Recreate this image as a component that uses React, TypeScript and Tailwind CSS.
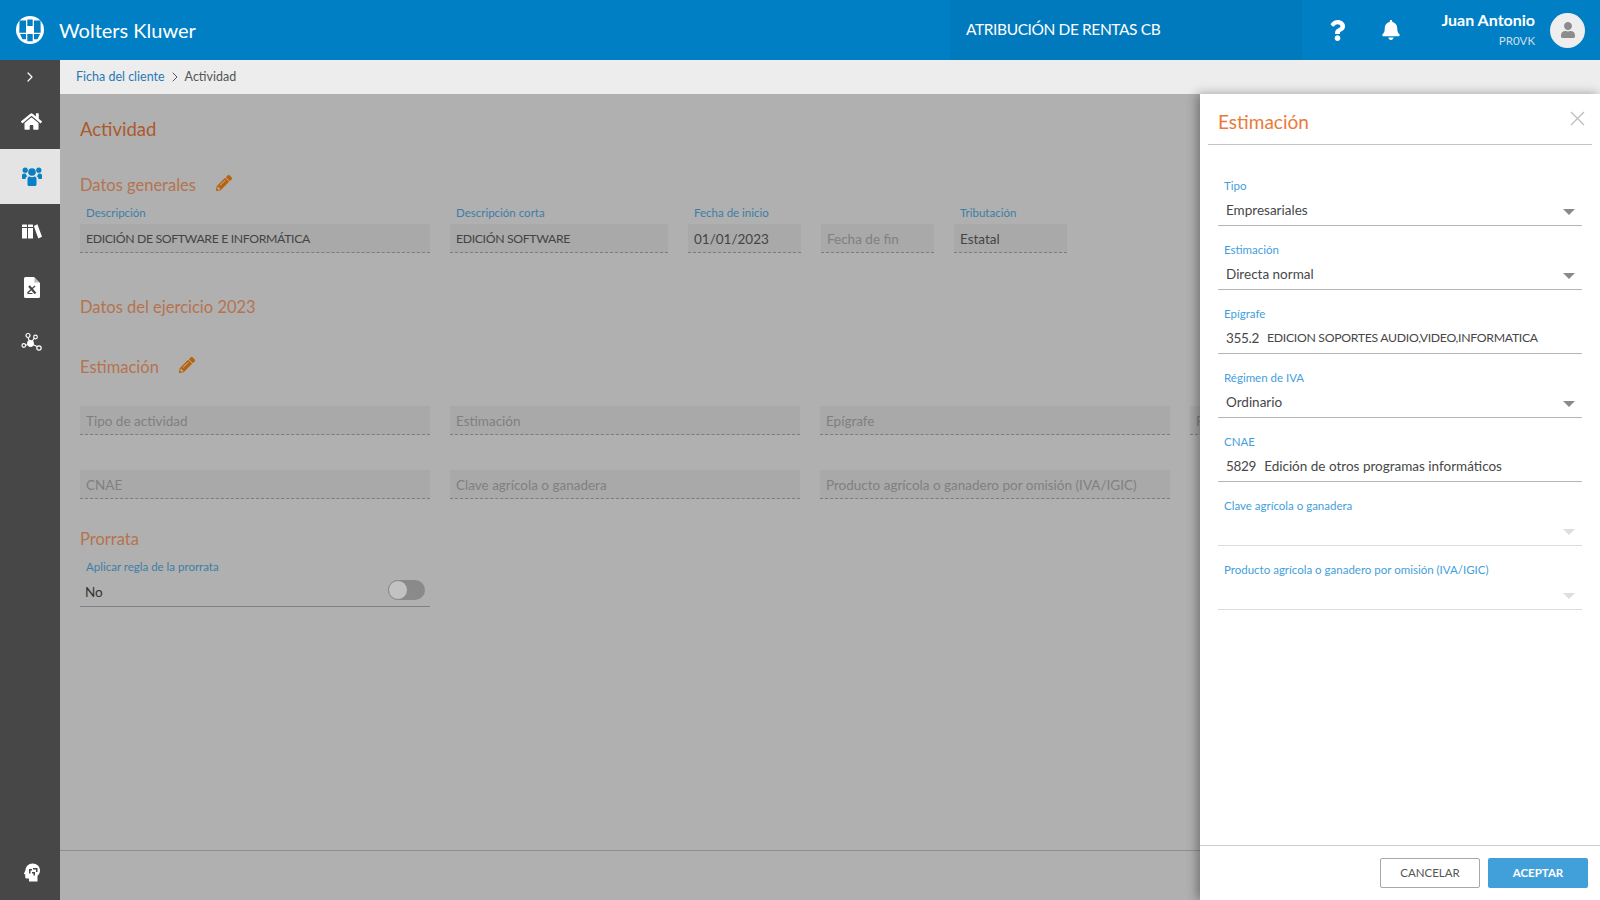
import React from "react"
import { ChevronRight } from "lucide-react"
import { FaHome, FaPencilAlt, FaQuestion, FaBell, FaUser } from "react-icons/fa"

const font = "[font-family:Lato,'Liberation_Sans',sans-serif]"

function Logo() {
  return (
    <svg width="30" height="30" viewBox="0 0 30 30">
      <circle cx="15" cy="15" r="14" fill="#fff" />
      <path d="M4.500 5.500h6.500v12.200H4.300zM12.300 4.500h5.400v6.500h-5.400zM19 5.500h6.500l.2 12.200H19zM5 19h6v5.300H7.500zM12.300 19h5.400v7.200h-5.400zM19 19h6l-2.500 5.300H19z" fill="#007fc5" />
    </svg>
  )
}

function UsersIcon() {
  return (
    <svg width="20" height="19" viewBox="0 0 20 19" fill="#0a80c4">
      <circle cx="3.200" cy="3.200" r="2.600" />
      <circle cx="16.800" cy="3.200" r="2.600" />
      <circle cx="10" cy="5" r="3.800" />
      <path d="M0 8.500c0-1.200.8-2 2-2h1.500c.3 1.200 1 2 1.800 2.700-1 .5-1.800 1.500-1.900 2.800H1c-.6 0-1-.4-1-1zM20 8.500c0-1.200-.8-2-2-2h-1.500c-.3 1.200-1 2-1.800 2.700 1 .5 1.800 1.500 1.900 2.800H19c.6 0 1-.4 1-1z" />
      <path d="M5.500 12c0-1.400.8-2.300 2-2.500.7.500 1.500.8 2.500.8s1.800-.3 2.500-.8c1.200.2 2 1.100 2 2.500v5.500c0 .8-.6 1.500-1.500 1.500H7c-.9 0-1.500-.7-1.500-1.500z" />
    </svg>
  )
}

function BooksIcon() {
  return (
    <svg width="20" height="15" viewBox="0 0 20 15" fill="#fff">
      <rect x="0" y="0.500" width="5" height="14" rx="0.500" />
      <rect x="6" y="0.500" width="5" height="14" rx="0.500" />
      <path d="M11.800 2l3.600-1.700L20 12.800 16.300 14.500z" />
      <rect x="0" y="3" width="5" height="1" fill="#474747" />
      <rect x="6" y="3" width="5" height="1" fill="#474747" />
    </svg>
  )
}

function FileIcon() {
  return (
    <svg width="16" height="21" viewBox="0 0 16 21">
      <path d="M1.500 0H10l6 6v13.500a1.500 1.500 0 0 1-1.500 1.500h-13A1.500 1.500 0 0 1 0 19.500v-18A1.500 1.500 0 0 1 1.500 0z" fill="#fff" />
      <path d="M10.500 1l4.500 4.500h-4.500z" fill="#b5b5b5" />
      <path d="M5 9l6.500 7.500" stroke="#474747" strokeWidth="2.200" fill="none" />
      <path d="M3.500 16l7.500-7" stroke="#474747" strokeWidth="1.300" fill="none" />
      <path d="M3.500 16.500h5" stroke="#474747" strokeWidth="1" fill="none" />
    </svg>
  )
}

function NetworkIcon() {
  return (
    <svg width="22" height="22" viewBox="0 0 22 22" fill="none" stroke="#fff" strokeWidth="1.200">
      <path d="M9.500 11.500L7 5.500M9.500 11.500L16 14.500M9.500 11.500L4 13.500M11 9.500L14 5" />
      <circle cx="9.500" cy="11.500" r="2.800" fill="#fff" />
      <circle cx="7" cy="3.500" r="2" fill="#474747" />
      <circle cx="14.500" cy="5" r="1.800" fill="#474747" />
      <circle cx="18" cy="16" r="2.200" fill="#474747" />
      <circle cx="2.800" cy="13.500" r="1.800" fill="#474747" />
    </svg>
  )
}

function HeadIcon() {
  return (
    <svg width="18" height="19" viewBox="0 0 18 19">
      <path d="M9.500 0.500c4.500 0 7.500 3 7.500 7 0 2.400-1 4-2.500 5.200V18.500H6v-3H3.500c-.8 0-1.300-.7-1.300-1.500V11.500L.8 10.800 2.400 7.500C2.700 3.500 5.500.5 9.500.5z" fill="#fff" />
      <path d="M6 6h3v1.500H7.500v3H6zM10 5h4.500v4H13V6.500h-3zM9 9h3v3.500h-1.500V10.500H9z" fill="#474747" />
    </svg>
  )
}

function Field({ label, value, placeholder, w, caps }: { label?: string; value?: string; placeholder?: string; w: string; caps?: boolean }) {
  return (
    <div className={w}>
      {label && <div className="h-[14px] mb-[4px] px-[6px] text-[11.5px] leading-[14px] text-[#3d7ea6]">{label}</div>}
      <div className={`h-[29px] bg-[#a9a9a9] border-b border-dashed border-[#7d7d7d] px-[6px] whitespace-nowrap ${caps ? "text-[12.25px] -tracking-[0.35px]" : "text-[13.5px]"} ${placeholder ? "text-[#808080] leading-[31px]" : "text-[#444] leading-[30px]"}`}>
        {value ?? placeholder}
      </div>
    </div>
  )
}

function SectionTitle({ children, pencil }: { children: React.ReactNode; pencil?: boolean }) {
  return (
    <div className="flex items-center h-[24px]">
      <span className="text-[16.5px] leading-[25px] text-[#b5734f]">{children}</span>
      {pencil && <FaPencilAlt className="ml-[20px] text-[#b8620b] text-[16px] -mt-[5px]" />}
    </div>
  )
}

function PanelField({ label, code, value, arrow, disabled, caps }: { label: string; code?: string; value?: string; arrow?: boolean; disabled?: boolean; caps?: boolean }) {
  return (
    <div className={`h-[64px] border-b ${disabled ? "border-[#dcdcdc]" : "border-[#b5b5b5]"} relative`}>
      <div className="pt-[17px] pl-[6px] h-[32px] text-[11.5px] leading-[14px] text-[#43a0db]">{label}</div>
      <div className="pl-[8px] mt-[7px] h-[18px] flex text-[13.5px] leading-[18px] text-[#474747] whitespace-pre">
        {code && <span className="mr-[8px] -tracking-[0.3px]">{code}</span>}
        <span className={caps ? "text-[12.25px] -tracking-[0.3px]" : ""}>{value}</span>
      </div>
      {arrow && (
        <div className={`absolute right-[7px] top-[47px] w-0 h-0 border-x-[6.5px] border-x-transparent border-t-[6px] ${disabled ? "border-t-[#dedede]" : "border-t-[#8a8a8a]"}`} />
      )}
    </div>
  )
}

export default function App() {
  return (
    <div className={`${font} w-[1600px] h-[900px] flex flex-col overflow-hidden`}>
      {/* Header */}
      <header className="h-[60px] flex items-center bg-[#007fc5] text-white shrink-0">
        <div className="w-[59px] pl-[1px] flex justify-center">
          <Logo />
        </div>
        <span className="text-[20px]">Wolters Kluwer</span>
        <div className="ml-auto w-[352px] h-full bg-[#0079bd] flex items-center pl-[16px] text-[15.5px] -tracking-[0.4px]">ATRIBUCIÓN DE RENTAS CB</div>
        <div className="w-[298px] h-full flex items-center">
          <FaQuestion className="ml-[25px] text-[21px]" />
          <FaBell className="ml-[33px] text-[20px]" />
          <div className="ml-auto text-right mr-[15px]">
            <div className="text-[16px] leading-[20px] font-bold">Juan Antonio</div>
            <div className="text-[11.5px] leading-[21px] text-[#d4dfe6]">PR0VK</div>
          </div>
          <div className="w-[35px] h-[35px] rounded-full bg-[#eeeeee] flex items-center justify-center mr-[15px]">
            <FaUser className="text-[#8c8c8c] text-[16px]" />
          </div>
        </div>
      </header>

      <div className="flex-1 flex min-h-0">
        {/* Sidebar */}
        <nav className="w-[60px] bg-[#474747] flex flex-col items-center text-white shrink-0">
          <div className="h-[34px] flex items-center justify-center">
            <ChevronRight size={16} strokeWidth={1.8} />
          </div>
          <div className="h-[55px] w-full flex items-center justify-center pl-[3px]"><FaHome className="text-[21px]" /></div>
          <div className="h-[55px] w-full flex items-center justify-center pl-[3px] bg-[#e4e4e4]"><UsersIcon /></div>
          <div className="h-[55px] w-full flex items-center justify-center pl-[3px]"><BooksIcon /></div>
          <div className="h-[55px] w-full flex items-center justify-center pl-[3px] pt-[2px]"><FileIcon /></div>
          <div className="h-[55px] w-full flex items-center justify-center pl-[3px] pt-[2px]"><NetworkIcon /></div>
          <div className="mt-auto h-[56px] w-full flex items-center justify-center pl-[3px]"><HeadIcon /></div>
        </nav>

        <div className="flex-1 flex flex-col min-w-0">
          {/* Breadcrumb */}
          <div className="h-[34px] bg-[#ededed] flex items-center pl-[16px] text-[12.5px] shrink-0">
            <span className="text-[#2a79b5]">Ficha del cliente</span>
            <ChevronRight size={16} strokeWidth={1.5} className="mx-[2px] text-[#555]" />
            <span className="text-[#555]">Actividad</span>
          </div>

          <div className="flex-1 flex min-h-0">
            {/* Main, dimmed behind the panel */}
            <main className="flex-1 min-w-0 bg-[#b0b0b0] flex flex-col overflow-hidden">
              <div className="flex-1 pl-[20px] pt-[23px]">
                <div className="text-[18.5px] leading-[24px] text-[#ac5a2d]">Actividad</div>

                <div className="mt-[32px]"><SectionTitle pencil>Datos generales</SectionTitle></div>
                <div className="mt-[9px] flex gap-[20px]">
                  <Field w="w-[350px] shrink-0" label="Descripción" value="EDICIÓN DE SOFTWARE E INFORMÁTICA" caps />
                  <Field w="w-[218px] shrink-0" label="Descripción corta" value="EDICIÓN SOFTWARE" caps />
                  <Field w="w-[113px] shrink-0" label="Fecha de inicio" value="01/01/2023" />
                  <Field w="w-[113px] shrink-0" label=" " placeholder="Fecha de fin" />
                  <Field w="w-[113px] shrink-0" label="Tributación" value="Estatal" />
                </div>

                <div className="mt-[42px]"><SectionTitle>Datos del ejercicio 2023</SectionTitle></div>

                <div className="mt-[36px]"><SectionTitle pencil>Estimación</SectionTitle></div>
                <div className="mt-[27px] flex gap-[20px]">
                  <Field w="w-[350px] shrink-0" placeholder="Tipo de actividad" />
                  <Field w="w-[350px] shrink-0" placeholder="Estimación" />
                  <Field w="w-[350px] shrink-0" placeholder="Epígrafe" />
                  <Field w="w-[350px] shrink-0" placeholder="Régimen de IVA" />
                </div>
                <div className="mt-[35px] flex gap-[20px]">
                  <Field w="w-[350px] shrink-0" placeholder="CNAE" />
                  <Field w="w-[350px] shrink-0" placeholder="Clave agrícola o ganadera" />
                  <Field w="w-[350px] shrink-0" placeholder="Producto agrícola o ganadero por omisión (IVA/IGIC)" />
                </div>

                <div className="mt-[28px]"><SectionTitle>Prorrata</SectionTitle></div>
                <div className="mt-[9px] w-[350px]">
                  <div className="h-[14px] px-[6px] text-[11.5px] leading-[14px] text-[#3d7ea6]">Aplicar regla de la prorrata</div>
                  <div className="h-[33px] border-b border-[#808080] flex items-center pl-[5px] pr-[5px] text-[13.5px] text-[#333]">
                    <span className="mt-[5px]">No</span>
                    <div className="ml-auto -mt-[1px] w-[37px] h-[20px] rounded-full bg-[#8a8a8a] flex items-center">
                      <div className="w-[20px] h-[20px] rounded-full bg-[#c2c2c2] border border-[#8a8a8a]" />
                    </div>
                  </div>
                </div>
              </div>
              <div className="h-[50px] border-t border-[#8f8f8f] shrink-0" />
            </main>

            {/* Estimación panel */}
            <aside className="w-[400px] shrink-0 bg-white flex flex-col shadow-[-3px_0_10px_rgba(0,0,0,0.35)] relative">
              <div className="mx-[8px] h-[51px] border-b border-[#c4c4c4] flex items-start justify-between pl-[10px] pr-[7px]">
                <span className="mt-[16px] text-[19px] leading-[24px] text-[#ea7a3a]">Estimación</span>
                <svg className="mt-[17px]" width="15" height="15" viewBox="0 0 15 15" stroke="#c0c0c0" strokeWidth="1.400">
                  <path d="M1 1l13 13M14 1L1 14" />
                </svg>
              </div>
              <div className="flex-1 pl-[18px] pr-[18px] pt-[17px]">
                <PanelField label="Tipo" value="Empresariales" arrow />
                <PanelField label="Estimación" value="Directa normal" arrow />
                <PanelField label="Epígrafe" code="355.2" value="EDICION SOPORTES AUDIO,VIDEO,INFORMATICA" caps />
                <PanelField label="Régimen de IVA" value="Ordinario" arrow />
                <PanelField label="CNAE" code="5829" value="Edición de otros programas informáticos" />
                <PanelField label="Clave agrícola o ganadera" arrow disabled />
                <PanelField label="Producto agrícola o ganadero por omisión (IVA/IGIC)" arrow disabled />
              </div>
              <div className="h-[55px] border-t border-[#cccccc] flex items-start justify-end pr-[12px] pt-[12px] gap-[8px] text-[11.5px] shrink-0">
                <button className="w-[100px] h-[30px] rounded-[2px] border border-[#a8a8a8] text-[#555]">CANCELAR</button>
                <button className="w-[100px] h-[30px] rounded-[2px] bg-[#419fd9] text-white font-bold">ACEPTAR</button>
              </div>
            </aside>
          </div>
        </div>
      </div>
    </div>
  )
}
